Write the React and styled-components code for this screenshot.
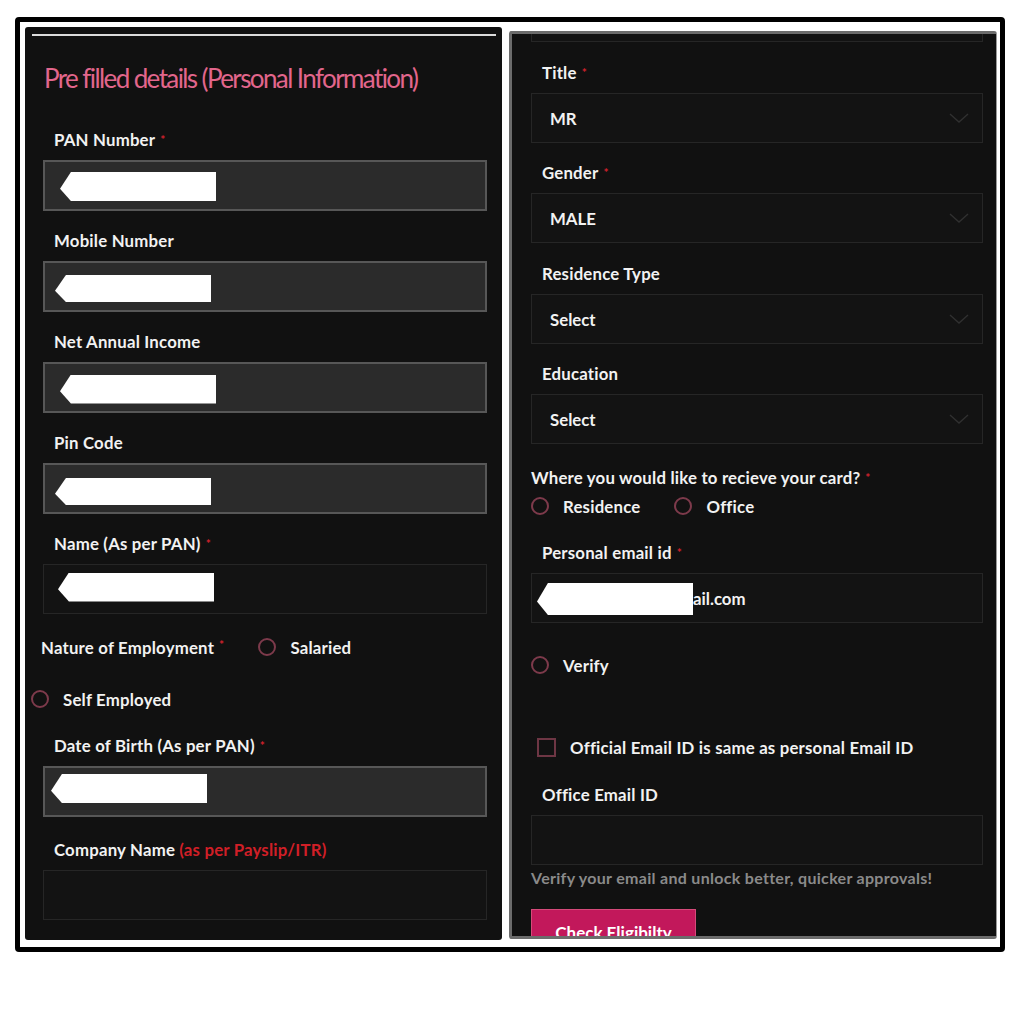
import React from 'react';
import styled, { createGlobalStyle } from 'styled-components';

const GlobalStyle = createGlobalStyle`
  body {
    margin: 0;
    background: #ffffff;
    font-family: Lato, "Open Sans", sans-serif;
  }
`;

const Frame = styled.div`
  box-sizing: border-box;
  margin: 17px 0 0 15px;
  width: 990px;
  height: 935px;
  border: 5px solid #000;
  border-radius: 4px;
  padding: 5px 3px 7px 5px;
  display: flex;
  gap: 7px;
  background: #fff;
`;

const LeftPanel = styled.section`
  box-sizing: border-box;
  width: 477px;
  height: 913px;
  background: #111111;
  border-radius: 3px;
  padding: 0 15px 0 18px;
  overflow: hidden;
`;

const RightPanel = styled.section`
  box-sizing: border-box;
  width: 488px;
  height: 908px;
  margin-top: 4px;
  background: #111111;
  border: 3px solid #6c6c6c;
  border-right: 1px solid #9a9a9a;
  border-radius: 3px;
  padding: 0 13px 0 19px;
  overflow: hidden;
`;

const TopRule = styled.div`
  height: 2px;
  margin: 7px -9px 0 -11px;
  background: #dcdcdc;
`;

const Heading = styled.h1`
  margin: 26px 0 36px 1px;
  font-size: 26px;
  line-height: 32px;
  font-weight: 400;
  letter-spacing: -1.6px;
  color: #e2668c;
  white-space: nowrap;
`;

const Label = styled.div`
  padding-left: ${p => (p.$flush ? 0 : 11)}px;
  margin: ${p => p.$top || 0}px 0 10px 0;
  font-size: 16.8px;
  line-height: 20px;
  font-weight: 700;
  letter-spacing: 0.2px;
  color: #f2f2f2;
  white-space: nowrap;
`;

const Req = styled.span`
  color: #d3212d;
  font-size: 12px;
  vertical-align: top;
  margin-left: 5px;
`;

const Note = styled.span`
  color: #d11f27;
`;

const Input = styled.div`
  box-sizing: border-box;
  position: relative;
  height: ${p => p.$h || 50}px;
  margin-bottom: ${p => p.$mb ?? 20}px;
  display: flex;
  align-items: center;
  padding-left: ${p => p.$pad || 15}px;
  background: ${p => (p.$filled ? '#2b2b2b' : '#131313')};
  border: ${p => (p.$filled ? '2px solid #575757' : '1px solid #262626')};
  font-size: 16.8px;
  font-weight: 700;
  color: #f2f2f2;
`;

const Stub = styled.div`
  height: 7px;
  border: 1px solid #262626;
  border-top: none;
  background: #131313;
`;

const Redact = styled.div`
  width: 156px;
  height: ${p => p.$h || 29}px;
  margin-top: ${p => p.$dy || 0}px;
  background: #ffffff;
  clip-path: polygon(0 58%, 7% 0, 100% 0, 100% 100%, 7% 100%);
  flex-shrink: 0;
`;

const Chevron = styled.svg`
  position: absolute;
  right: 13px;
  top: 50%;
  margin-top: -5px;
`;

const Row = styled.div`
  display: flex;
  align-items: center;
  height: ${p => p.$h || 30}px;
  margin: ${p => p.$top || 0}px 0 0 ${p => p.$left || 0}px;
  font-size: 16.8px;
  font-weight: 700;
  letter-spacing: 0.2px;
  color: #f2f2f2;
  white-space: nowrap;
`;

const RowText = styled.span`
  margin-right: ${p => p.$gap || 0}px;
`;

const Radio = styled.span`
  box-sizing: border-box;
  width: 18px;
  height: 18px;
  border-radius: 50%;
  border: 2px solid #7d3a4b;
  margin-right: 14px;
  flex-shrink: 0;
`;

const Check = styled.span`
  box-sizing: border-box;
  width: 19px;
  height: 19px;
  border: 2px solid #6e3644;
  margin-right: 14px;
  flex-shrink: 0;
`;

const Hint = styled.div`
  margin-top: 4px;
  font-size: 16px;
  line-height: 18px;
  font-weight: 700;
  color: #8a8a8a;
  letter-spacing: 0.3px;
  white-space: nowrap;
`;

const Button = styled.button`
  margin-top: 22px;
  width: 165px;
  height: 46px;
  border: 1px solid #d64a7a;
  background: #c2185b;
  color: #fff;
  font-family: inherit;
  font-size: 17px;
  font-weight: 700;
  padding-top: 2px;
`;

function Req1() {
  return <Req>*</Req>;
}

function Select({ value, mb }) {
  return (
    <Input $pad={18} $mb={mb}>
      {value}
      <Chevron width="20" height="10" viewBox="0 0 20 10">
        <polyline points="1,1 10,9 19,1" fill="none" stroke="#303030" strokeWidth="1.4" />
      </Chevron>
    </Input>
  );
}

export default function App() {
  return (
    <>
      <GlobalStyle />
      <Frame>
        <LeftPanel>
          <TopRule />
          <Heading>Pre filled details (Personal Information)</Heading>

          <Label>PAN Number<Req1 /></Label>
          <Input $filled $h={51}><Redact $dy={2} /></Input>

          <Label>Mobile Number</Label>
          <Input $filled $h={51} $pad={10}><Redact $h={27} $dy={4} /></Input>

          <Label>Net Annual Income</Label>
          <Input $filled $h={51} $pad={15}><Redact $dy={3} /></Input>

          <Label>Pin Code</Label>
          <Input $filled $h={51} $pad={10}><Redact $h={27} $dy={6} /></Input>

          <Label>Name (As per PAN)<Req1 /></Label>
          <Input $pad={14} $mb={0}><Redact $dy={-4} /></Input>

          <Row $top={18} $left={-2}>
            <RowText $gap={34}>Nature of Employment<Req1 /></RowText>
            <Radio />
            Salaried
          </Row>
          <Row $top={22} $left={-12}>
            <Radio />
            Self Employed
          </Row>

          <Label $top={22}>Date of Birth (As per PAN)<Req1 /></Label>
          <Input $filled $h={51} $pad={6} $mb={23}><Redact $dy={-6} /></Input>

          <Label>Company Name <Note>(as per Payslip/ITR)</Note></Label>
          <Input $mb={0} />
        </LeftPanel>

        <RightPanel>
          <Stub />
          <Label $top={21}>Title<Req1 /></Label>
          <Select value="MR" />
          <Label>Gender<Req1 /></Label>
          <Select value="MALE" mb={21} />
          <Label>Residence Type</Label>
          <Select value="Select" />
          <Label>Education</Label>
          <Select value="Select" mb={24} />

          <Label $flush>Where you would like to recieve your card?<Req1 /></Label>
          <Row $h={20} $top={-2}>
            <Radio />
            <RowText $gap={34}>Residence</RowText>
            <Radio />
            Office
          </Row>

          <Label $top={27}>Personal email id<Req1 /></Label>
          <Input $pad={5} $mb={0}>
            <Redact $h={32} $dy={2} />
            ail.com
          </Input>

          <Row $h={20} $top={32}>
            <Radio />
            Verify
          </Row>

          <Row $h={20} $top={62} $left={6}>
            <Check />
            Official Email ID is same as personal Email ID
          </Row>

          <Label $top={28}>Office Email ID</Label>
          <Input $mb={0} />
          <Hint>Verify your email and unlock better, quicker approvals!</Hint>
          <Button>Check Eligibilty</Button>
        </RightPanel>
      </Frame>
    </>
  );
}
